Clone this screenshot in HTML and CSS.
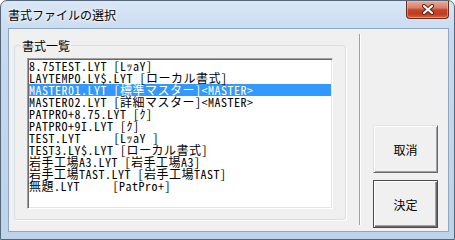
FILE: index.html
```html
<!DOCTYPE html>
<html lang="ja">
<head>
  <meta charset="UTF-8" />
  <title>書式ファイルの選択</title>
  <link rel="stylesheet" href="styles.css">
</head>
<body>
  <div class="window">
    <div class="titlebar">
      <div class="title">書式ファイルの選択</div>
      <div class="close-btn">
        <svg width="14" height="11" viewBox="0 0 14 11">
          <path d="M3 2 L11 9 M11 2 L3 9" stroke="#5a1a10" stroke-width="4" stroke-linecap="round" />
          <path d="M3 2 L11 9 M11 2 L3 9" stroke="#ffffff" stroke-width="2.2" stroke-linecap="round" />
        </svg>
      </div>
    </div>

    <div class="client">
      <!-- 書式一覧 group -->
      <div class="group">
        <span class="group-label">書式一覧</span>
        <div class="listbox">
          <div class="item">8.75TEST.LYT [LｯaY]</div>
          <div class="item">LAYTEMPO.LY$.LYT [ローカル書式]</div>
          <div class="item selected">MASTER01.LYT [標準マスター]&lt;MASTER&gt;</div>
          <div class="item">MASTER02.LYT [詳細マスター]&lt;MASTER&gt;</div>
          <div class="item">PATPRO+8.75.LYT [ｸ]</div>
          <div class="item">PATPRO+9I.LYT [ｸ]</div>
          <div class="item">TEST.LYT     [LｯaY ]</div>
          <div class="item">TEST3.LY$.LYT [ローカル書式]</div>
          <div class="item">岩手工場A3.LYT [岩手工場A3]</div>
          <div class="item">岩手工場TAST.LYT [岩手工場TAST]</div>
          <div class="item">無題.LYT     [PatPro+]</div>
        </div>
      </div>

      <div class="separator"></div>

      <div class="buttons">
        <button class="btn">取消</button>
        <button class="btn default">決定</button>
      </div>
    </div>
  </div>
</body>
</html>
```

FILE: styles.css
```css
* {
  box-sizing: border-box;
}
body {
  margin: 0;
  background: #ffffff;
  font-family: "Noto Sans CJK JP", "Liberation Sans", sans-serif;
}
.window {
  width: 455px;
  height: 240px;
  border: 1px solid #55657a;
  border-radius: 7px 7px 0 0;
  background: linear-gradient(to bottom, #d9e7f6 0%, #c6daf0 14%, #bdd3eb 100%);
  display: flex;
  flex-direction: column;
  padding: 0 5px 7px 7px;
}
.titlebar {
  height: 27px;
  display: flex;
  justify-content: space-between;
  align-items: flex-start;
}
.title {
  margin-top: 6px;
  font-size: 12px;
  line-height: 16px;
  color: #000;
  text-shadow: 0 0 6px #ffffff, 0 0 3px #ffffff;
}
.close-btn {
  width: 43px;
  height: 18px;
  border: 1px solid #6a2a20;
  border-top: none;
  border-radius: 0 0 4px 4px;
  background: linear-gradient(to bottom, #e9ad98 0%, #d98069 40%, #c5452a 52%, #c13c1f 78%, #d7693f 100%);
  box-shadow: inset 0 0 0 1px rgba(255, 200, 180, 0.45);
  display: flex;
  justify-content: center;
  align-items: center;
}
.client {
  flex: 1;
  border: 1px solid #8fa6be;
  background: #f0f0f0;
  display: flex;
  align-items: flex-start;
}
.group {
  margin: 16px 0 0 5px;
  width: 332px;
  height: 175px;
  border: 1px solid #d5dfe5;
  border-radius: 3px;
  box-shadow: 1px 1px 0 #ffffff;
  display: flex;
  flex-direction: column;
  padding-left: 12px;
}
.group-label {
  align-self: flex-start;
  margin: -8px 0 0 -6px;
  padding: 0 1px;
  background: #f0f0f0;
  font-size: 12px;
  line-height: 16px;
  color: #000;
}
.listbox {
  margin-top: 4px;
  width: 306px;
  height: 151px;
  background: #ffffff;
  border: 1px solid;
  border-color: #a0a0a0 #ffffff #ffffff #a0a0a0;
  box-shadow: inset 1px 1px 0 #696969, inset -1px -1px 0 #e3e3e3;
  padding: 1px;
  font-family: "Noto Sans Mono CJK JP", "Liberation Mono", "Noto Sans CJK JP", monospace;
  font-size: 12px;
  letter-spacing: 0.5px;
  line-height: 12px;
  color: #000;
}
.item {
  height: 12px;
  white-space: pre;
}
.item.selected {
  background: #3399ff;
  color: #ffffff;
}
.separator {
  margin: 5px 0 0 13px;
  height: 191px;
  width: 2px;
  border-left: 1px solid #a0a0a0;
  border-right: 1px solid #ffffff;
}
.buttons {
  margin: 96px 0 0 12px;
  display: flex;
  flex-direction: column;
  gap: 7px;
}
.btn {
  width: 65px;
  height: 48px;
  padding: 0;
  background: #f0f0f0;
  border: 1px solid;
  border-color: #e3e3e3 #696969 #696969 #e3e3e3;
  box-shadow: inset 1px 1px 0 #ffffff, inset -1px -1px 0 #a0a0a0;
  font-family: "Noto Sans CJK JP", sans-serif;
  font-size: 12px;
  color: #000;
}
.btn.default {
  border: 1px solid #4a4a4a;
  box-shadow: inset 1px 1px 0 #ffffff, inset -1px -1px 0 #696969, inset -2px -2px 0 #a0a0a0;
}
```
